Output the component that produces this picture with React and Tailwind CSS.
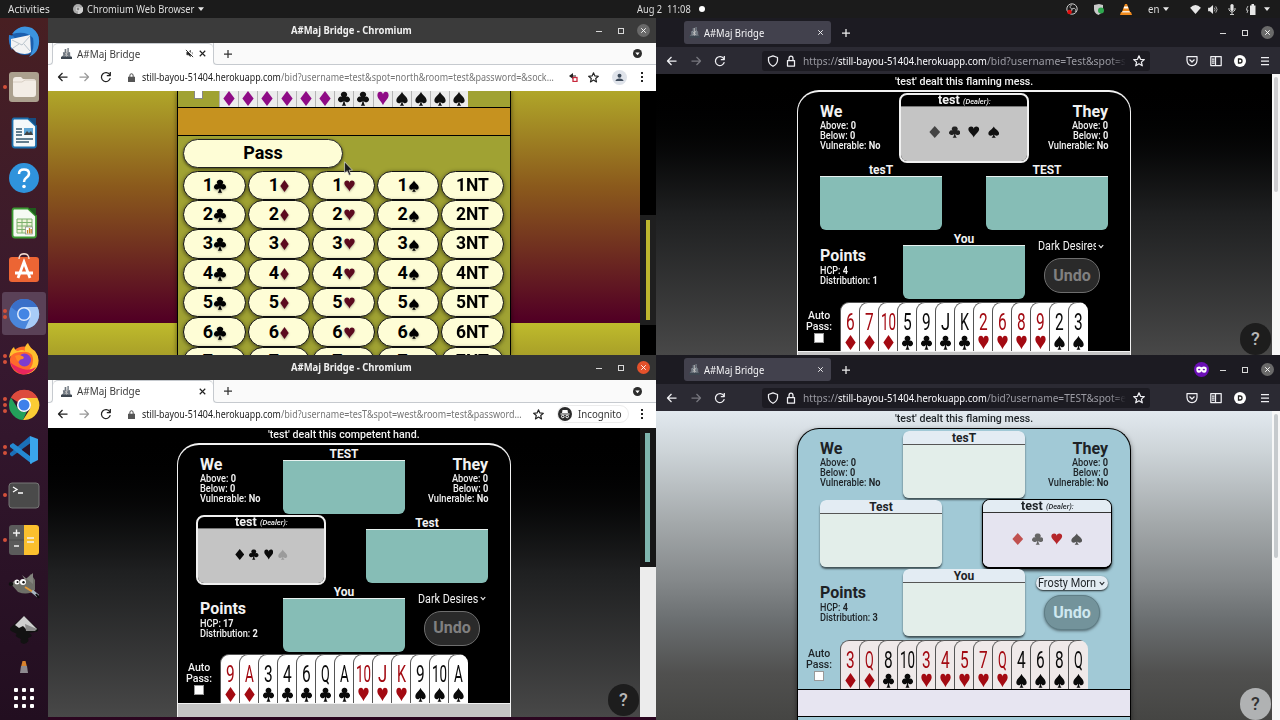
import React, { useLayoutEffect, useRef } from "react";

/* Text stretched horizontally to the width of its box. */
function Fit({ className = "", children }) {
  const outer = useRef(null);
  const inner = useRef(null);
  useLayoutEffect(() => {
    const target = outer.current.clientWidth;
    const natural = inner.current.offsetWidth;
    if (natural > 0) inner.current.style.transform = `scaleX(${target / natural})`;
  }, []);
  return (
    <span ref={outer} className={`block shrink-0 whitespace-nowrap text-left ${className}`}>
      <span ref={inner} className="inline-block origin-left whitespace-pre">
        {children}
      </span>
    </span>
  );
}

const SUITS = {
  d: "M8 0 L15.500 10 L8 20 L0.500 10 Z",
  h: "M8 19 C6.5 14 0.5 10.5 0.5 5.5 C0.5 2.5 2.3 1 4.4 1 C6.3 1 7.6 2.5 8 4.5 C8.4 2.5 9.7 1 11.6 1 C13.7 1 15.5 2.5 15.5 5.5 C15.5 10.5 9.5 14 8 19 Z",
  s: "M8 1 C9.5 5.5 15.5 8 15.5 12.5 C15.5 15 13.8 16.2 12 16.2 C10.5 16.2 9.3 15.4 8.7 14.2 C8.8 16.5 9.6 18.2 11 19.5 L5 19.5 C6.4 18.2 7.2 16.5 7.3 14.2 C6.7 15.4 5.5 16.2 4 16.2 C2.2 16.2 0.5 15 0.5 12.5 C0.5 8 6.5 5.5 8 1 Z",
  c: "M8 1 A3.7 3.7 0 0 1 10.7 7.6 A3.8 3.8 0 1 1 8.8 13 C8.9 15.8 9.5 18 11 19.5 L5 19.5 C6.5 18 7.1 15.8 7.2 13 A3.8 3.8 0 1 1 5.3 7.6 A3.7 3.7 0 0 1 8 1 Z",
};

function Suit({ s, className = "" }) {
  return (
    <svg viewBox="0 0 16 20" preserveAspectRatio="none" className={`shrink-0 ${className}`} fill="currentColor">
      <path d={SUITS[s]} />
    </svg>
  );
}

function Caret({ className = "" }) {
  return (
    <svg viewBox="0 0 8 5" className={`h-[4px] w-[6px] ${className}`} fill="#e6e6e6">
      <path d="M0 0H8L4 5Z" />
    </svg>
  );
}

/* ---------- desktop top bar ---------- */
function TopBar() {
  return (
    <header className="flex h-[18px] shrink-0 items-center bg-[#1b1b1b] font-['Noto_Sans',sans-serif] text-[10.5px] leading-[18px] text-[#dedede]">
      <Fit className="ml-2 w-[42px]">Activities</Fit>
      <svg viewBox="0 0 10 10" className="ml-[23px] h-[10px] w-[10px]">
        <circle cx="5" cy="5" r="5" fill="#aaa" />
        <path d="M5 5 L10 3 A5 5 0 0 1 5 10Z" fill="#d0d0d0" />
        <circle cx="5" cy="5" r="2.2" fill="#ddd" />
        <circle cx="5" cy="5" r="1.4" fill="#888" />
      </svg>
      <Fit className="ml-1 w-[107px]">Chromium Web Browser</Fit>
      <Caret className="ml-[4px]" />
      <Fit className="ml-[433px] w-[54px]">Aug 2  11:08</Fit>
      <span className="ml-2 h-[6px] w-[6px] rounded-full bg-white" />
      <div className="ml-auto flex items-center">
        <svg viewBox="0 0 12 12" className="h-[12px] w-[12px]">
          <circle cx="6" cy="6" r="5.2" fill="#1c1c1c" stroke="#ccc" strokeWidth="1" />
          <path d="M6 6 C3 5 4 2 6 2 M6 6 C9 4 11 7 9 9 M6 6 C6 9 3 10 2 8" stroke="#bbb" fill="none" />
          <circle cx="3.5" cy="9" r="2.3" fill="#e01010" />
        </svg>
        <svg viewBox="0 0 10 11" className="ml-[16px] h-[11px] w-[10px]">
          <path d="M0 1 L5 0 L9 1 V6 Q8 9 4.500 11 Q0 9 0 5Z" fill="#c9c9c9" />
          <circle cx="7" cy="6.500" r="3" fill="#2fa84f" />
        </svg>
        <svg viewBox="0 0 12 12" className="ml-[16px] h-[12px] w-[12px]">
          <path d="M5 1H7L10 9H2Z" fill="#f08a1d" />
          <path d="M4.200 3.500H7.800L8.500 5.500H3.500Z" fill="#fff" />
          <path d="M1 9H11L12 12H0Z" fill="#f08a1d" />
          <path d="M2.500 8H9.500L10 9.500H2Z" fill="#f4e6d4" />
        </svg>
        <Fit className="ml-[16px] w-[11px]">en</Fit>
        <Caret className="ml-[4px]" />
        <svg viewBox="0 0 12 10" className="ml-[21px] h-[9px] w-[11px]" fill="#e6e6e6">
          <path d="M0 3 Q6 -3 12 3 L6 10Z" />
        </svg>
        <svg viewBox="0 0 12 10" className="ml-[7px] h-[9px] w-[11px]" fill="#e6e6e6">
          <path d="M0 3H2L5.500 0V10L2 7H0Z" />
          <path d="M7 3Q8.500 5 7 7M8.500 1.500Q11.500 5 8.500 8.500" fill="none" stroke="#bbb" />
        </svg>
        <svg viewBox="0 0 8 11" className="ml-[9px] h-[11px] w-[8px]">
          <rect x="2.400" y="0" width="3.200" height="7" rx="1.600" fill="#e6e6e6" />
          <path d="M1 4V6Q4 10 7 6V4M4 8V11M2 10.500H6" stroke="#ccc" fill="none" />
        </svg>
        <svg viewBox="0 0 10 11" className="ml-[10px] h-[11px] w-[10px]">
          <path d="M2 2L0 6H2L1 9" stroke="#bbb" fill="none" />
          <path d="M4 1.500H5.500V0H8V1.500H9.500V11H4Z" fill="#e6e6e6" />
        </svg>
        <Caret className="ml-[8px] mr-[10px]" />
      </div>
    </header>
  );
}

/* ---------- dock ---------- */
function DockItem({ dots = 0, active = false, children }) {
  return (
    <div className="flex h-[45.3px] w-12 shrink-0 items-center">
      <div className={`ml-[2px] flex h-[43px] w-[44px] items-center rounded-[3px] ${active ? "bg-[#5a4157]" : ""}`}>
        <div className="flex w-[6px] flex-col items-center gap-[2px]">
          {Array.from({ length: dots }, (_, i) => (
            <span key={i} className="h-[4px] w-[4px] rounded-full bg-[#d2503a]" />
          ))}
        </div>
        <svg viewBox="0 0 32 32" className="h-[32px] w-[32px]">
          {children}
        </svg>
      </div>
    </div>
  );
}

function Dock() {
  return (
    <nav className="flex w-12 shrink-0 flex-col bg-gradient-to-b from-[#481f22] via-[#36182f] to-[#220e20] pt-[1.500px]">
      <DockItem>
        <circle cx="17" cy="15" r="14" fill="#1c5fae" />
        <path d="M4 8Q12 -3 24 2Q34 9 30 22Q28 28 21 31Q27 24 25 12Q18 4 4 8Z" fill="#3c94e0" />
        <path d="M1 9Q6 9 7 13L4 24Q0 18 1 9Z" fill="#2d7ccc" />
        <path d="M3 13L22 9L23 26Q18 30 8 26L3 21Z" fill="#f3f3f3" />
        <path d="M4 14L14 19L22 10M5 22L11 18M22 25L16 18" stroke="#b9c4cc" fill="none" />
      </DockItem>
      <DockItem dots={1}>
        <rect x="1" y="1" width="30" height="30" rx="3" fill="#aba08e" />
        <path d="M5 9Q5 6 8 6H13L15 8H25Q28 8 28 11V23Q28 26 25 26H8Q5 26 5 23Z" fill="#f3ede6" />
        <path d="M5 11L14 11L17 9H27" stroke="#d8cfc4" fill="none" />
      </DockItem>
      <DockItem>
        <path d="M6 1.500H20L28 9V28Q28 30.500 26 30.500H7Q4.500 30.500 4.500 28V4Q4.500 1.500 6 1.500Z" fill="#f5f8fa" stroke="#1b6fae" strokeWidth="1.800" />
        <path d="M20 1H28V9Z" fill="#174c80" />
        <path d="M8 12H14M8 15H14M8 18H14M8 22H25M8 25H21" stroke="#33566e" strokeWidth="1.300" />
        <rect x="16" y="11" width="9" height="7" fill="#5fa4d4" />
        <path d="M16 18L19 14L21 16L23 14L25 18Z" fill="#444" />
      </DockItem>
      <DockItem>
        <circle cx="16" cy="16" r="15" fill="#2f93dc" />
        <path d="M11 12Q11 7.500 16 7.500Q21 7.500 21 11.500Q21 14 18 16Q16 17.500 16 20" stroke="#fff" strokeWidth="2.500" fill="none" />
        <circle cx="16" cy="24.500" r="1.800" fill="#fff" />
      </DockItem>
      <DockItem>
        <path d="M6 1.500H20L28 9V28Q28 30.500 26 30.500H7Q4.500 30.500 4.500 28V4Q4.500 1.500 6 1.500Z" fill="#f6faf4" stroke="#3c9a33" strokeWidth="1.800" />
        <path d="M20 1H28V9Z" fill="#1f5a1c" />
        <path d="M9 12H24V26H9ZM9 15.500H24M9 19H24M9 22.500H24M14 12V26M19 12V26" stroke="#7cb06c" fill="#eef3d8" />
        <rect x="17.500" y="20" width="7" height="7" fill="#fff" stroke="#777" strokeWidth=".6" />
        <path d="M19.500 26.500V23M21.500 26.500V21M23.200 26.500V22" stroke="#c58426" strokeWidth="1.300" />
      </DockItem>
      <DockItem>
        <rect x="1" y="4" width="30" height="25" rx="3" fill="#ec6534" />
        <path d="M11 6Q11 1 16 .8Q21 1 21 6" stroke="#f4dccf" strokeWidth="1.400" fill="none" />
        <path d="M10 25L16 9L22 25M7 20H25" stroke="#fff" strokeWidth="2.800" fill="none" />
      </DockItem>
      <DockItem dots={2} active>
        <circle cx="16" cy="16" r="15" fill="#4a86dc" />
        <path d="M16 9H29.500A15 15 0 0 1 17 31L22 20Z" fill="#a8cbf7" />
        <path d="M3 9A15 15 0 0 1 29.500 9H16A7 7 0 0 0 9.500 14Z" fill="#3a6fc9" />
        <circle cx="16" cy="16" r="7" fill="#dfeafc" />
        <circle cx="16" cy="16" r="5.500" fill="#4385e4" />
      </DockItem>
      <DockItem dots={2}>
        <circle cx="16" cy="17.500" r="14" fill="#ff6a2b" />
        <path d="M1 15Q2 7 6 4Q7 8 10 8Q14 6 17 8Q16 3 20 0Q22 5 27 8Q33 16 29 24Q25 31 17 31Q28 22 24 12Q20 8 14 9Q6 8 1 15Z" fill="#ffbf2e" />
        <path d="M2 19Q5 29 15 31.500Q24 31 28 24Q22 28 15 26Q6 23 2 19Z" fill="#e8265e" />
        <circle cx="16.500" cy="17" r="6.500" fill="#7d3ccf" />
        <path d="M7 13Q11 11 14 13Q17 14 15 16Q11 16 11 19Q8 17 7 13Z" fill="#ff8b25" />
      </DockItem>
      <DockItem dots={3}>
        <path d="M16 16L3 8.500A15 15 0 0 1 29.500 9Z" fill="#dd4b3d" />
        <path d="M16 1A15 15 0 0 1 29.500 9H16A7 7 0 0 0 9.500 13L3 8.500A15 15 0 0 1 16 1Z" fill="#dd4b3d" />
        <path d="M3 8.500L10 20Q13 24 19 22L15 31A15 15 0 0 1 3 8.500Z" fill="#23a05a" />
        <path d="M16 9H29.500A15 15 0 0 1 15 31L22 20Q24 13 16 9Z" fill="#fbcc34" />
        <circle cx="16" cy="16" r="7" fill="#fff" />
        <circle cx="16" cy="16" r="5.500" fill="#3f80ea" />
      </DockItem>
      <DockItem dots={2}>
        <path d="M22 2L2 19V21L4 22.500L24 8Z" fill="#1b6fb8" />
        <path d="M2 11L5 9L24 23V30L2 13Z" fill="#2489d2" />
        <path d="M22 2L30 5V26L22 30Z" fill="#3aa5ec" />
        <path d="M22 10V22L14 16Z" fill="#2c1429" />
      </DockItem>
      <DockItem dots={1}>
        <rect x="1" y="4" width="30" height="25" rx="3" fill="#4a4a4a" stroke="#777" />
        <path d="M5 8L9 10.500L5 13M10 14H15" stroke="#fff" strokeWidth="1.300" fill="none" />
      </DockItem>
      <DockItem dots={1}>
        <path d="M4 1H16V31H4Q1 31 1 28V4Q1 1 4 1Z" fill="#5b5b5b" />
        <path d="M16 1H28Q31 1 31 4V28Q31 31 28 31H16Z" fill="#fbc02e" />
        <path d="M5 9H12M8.500 5.500V12.500M6 22H11M19 14H26M19 18H26" stroke="#f2f2f2" strokeWidth="1.400" />
        <path d="M1 16H16" stroke="#4a4a4a" />
      </DockItem>
      <DockItem>
        <path d="M3 14L7 10Q16 13 23 4L27 10V20Q20 26 10 22Z" fill="#6e6f68" />
        <path d="M14 5L17 10L25 3V14Z" fill="#83847e" />
        <circle cx="9" cy="12" r="2.500" fill="#fff" />
        <circle cx="15" cy="12" r="3" fill="#fff" />
        <circle cx="9.500" cy="12" r="1" fill="#111" />
        <circle cx="15.500" cy="12.300" r="1.200" fill="#111" />
        <ellipse cx="3" cy="14" rx="2.300" ry="2" fill="#111" />
        <path d="M17 17L25 22" stroke="#e49a35" strokeWidth="2" />
        <path d="M24 21L30 26" stroke="#a9b7c2" strokeWidth="3" />
        <path d="M28 24L31 28" stroke="#111" strokeWidth="2" />
      </DockItem>
      <DockItem>
        <path d="M16 1L30 14Q31 17 27 17L21 18Q27 21 20 23Q22 27 16 29Q11 28 13 24Q5 21 9 19L3 16Q1 14 3 12Z" fill="#121212" />
        <path d="M16 1L29 14L26 15L22 12L19 15L15 11L11 13L7 10Z" fill="#cfcfcf" />
        <path d="M17 9L29 14L27 16L18 16Z" fill="#8c8c8c" />
      </DockItem>
      <div className="flex h-[27px] items-center justify-center">
        <svg viewBox="0 0 8 12" className="h-[12px] w-[8px]">
          <path d="M2.500 0H5.500L7 6H1Z" fill="#d9812c" />
          <path d="M1 5H7L8 12H0Z" fill="#8e8a90" />
        </svg>
      </div>
      <div className="flex h-[34px] items-center justify-center">
        <div className="grid grid-cols-3 gap-[4px]">
          {Array.from({ length: 9 }, (_, i) => (
            <span key={i} className="h-[4px] w-[4px] rounded-[1px] bg-white" />
          ))}
        </div>
      </div>
    </nav>
  );
}

/* ---------- small icons ---------- */
const ICONS = {
  back: "M10.500 6H1.500M5.500 2L1.500 6L5.500 10",
  fwd: "M1.500 6H10.500M6.500 2L10.500 6L6.500 10",
  reload: "M9.800 3.800A4.500 4.500 0 1 0 10.300 7.200M10.300 1V4.500H6.800",
  plus: "M6 2V10M2 6H10",
  close: "M3 3L9 9M9 3L3 9",
  star: "M6 .8L7.500 4.300L11.300 4.600L8.400 7.100L9.300 10.800L6 8.800L2.700 10.800L3.600 7.100L.7 4.600L4.500 4.300Z",
  shield: "M6 .8L10.500 2.500V5.500Q10.200 9 6 11.300Q1.800 9 1.500 5.500V2.500Z",
  lock: "M2.500 5.500H9.500V11H2.500ZM4 5.500V3.500Q4 1 6 1Q8 1 8 3.500V5.500",
  pocket: "M1 1.500H11V5.500Q10.500 10.500 6 10.500Q1.500 10.500 1 5.500ZM3.500 4.500L6 7L8.500 4.500",
  sidebar: "M.8 1.500H11.200V10.500H.8ZM5.500 1.500V10.500M2 4H4.500M2 6H4.500M2 8H4.500",
  menu: "M2 2.500H10M2 6H10M2 9.500H10",
};
function Ico({ n, className = "h-3 w-3" }) {
  return (
    <svg viewBox="0 0 12 12" className={`shrink-0 ${className}`} fill="none" stroke="currentColor" strokeWidth="1.250" strokeLinejoin="round">
      <path d={ICONS[n]} />
    </svg>
  );
}

function WinButtons({ closeClass }) {
  return (
    <div className="mr-[6px] flex items-center text-[#d8d8d8]">
      <span className="mt-[2px] h-px w-[6px] bg-current" />
      <span className="ml-[16px] h-[6px] w-[6px] border border-current" />
      <span className={`ml-[13px] flex h-[13px] w-[13px] items-center justify-center rounded-full text-white ${closeClass}`}>
        <Ico n="close" className="h-[9px] w-[9px]" />
      </span>
    </div>
  );
}

function Favicon({ className = "" }) {
  return (
    <svg viewBox="0 0 12 12" className={`h-[11px] w-[11px] shrink-0 ${className}`}>
      <path d="M4 1H5.500V4H7V0H8.500V4L10 5V8L11 10V11H1V9L2.500 8L2 5L4 4Z" fill="#6f7780" />
      <path d="M4 5L8 9M8 4L4 9M6 1V11" stroke="#c5c5c5" strokeWidth=".8" />
      <path d="M0 9.500H12V12H0Z" fill="#3d4650" />
    </svg>
  );
}

/* ---------- Chromium frame ---------- */
function Chromium({ titleClass, closeClass, tabsClass, navClass, bodyClass, muted, incognito, urlRest, restClass, children }) {
  return (
    <section className="flex w-[608px] shrink-0 flex-col font-['Noto_Sans',sans-serif]">
      <div className={`flex shrink-0 items-center justify-between ${titleClass}`}>
        <Fit className="ml-[243px] w-[121px] pb-px text-[11px] leading-[16px] font-bold text-[#f0f0f0]">A#Maj Bridge - Chromium</Fit>
        <WinButtons closeClass={closeClass} />
      </div>
      <div className={`flex shrink-0 items-stretch bg-[#fafafa] ${tabsClass}`}>
        <div className="w-[5px] rounded-br-[4px] border-r border-b border-[#c6cacf]" />
        <div className="flex w-[160px] items-center rounded-t-[5px] border-t border-[#c6cacf] bg-white pb-[2px] text-[#3c3c3c]">
          <Favicon className="ml-2" />
          <Fit className="ml-[5px] w-[63px] text-[11px] leading-4">A#Maj Bridge</Fit>
          <span className="ml-auto flex items-center gap-[3px] text-[#222]">
            {muted && (
              <svg viewBox="0 0 10 10" className="h-[9px] w-[9px]">
                <path d="M2 3.500H4L6 1.500V8.500L4 6.500H2ZM8 3.500V6.500" fill="#222" stroke="#222" strokeWidth=".6" />
                <path d="M1 0L10 9" stroke="#fff" strokeWidth="1.600" />
                <path d="M1 1L9 9" stroke="#222" />
              </svg>
            )}
            <Ico n="close" className="mr-[5px] h-[11px] w-[11px]" />
          </span>
        </div>
        <div className="flex flex-1 items-center rounded-bl-[4px] border-b border-l border-[#c6cacf] text-[#333]">
          <Ico n="plus" className="ml-[8px] h-[12px] w-[12px]" />
          <svg viewBox="0 0 10 10" className="ml-auto mr-[14px] h-[9px] w-[9px]">
            <circle cx="5" cy="5" r="5" fill="#2c2c2c" />
            <path d="M2.600 3.800H7.400L5 7Z" fill="#fff" />
          </svg>
        </div>
      </div>
      <div className={`flex shrink-0 items-center bg-white text-[#222] ${navClass}`}>
        <Ico n="back" className="ml-[9px] h-3 w-3" />
        <Ico n="fwd" className="ml-[9px] h-3 w-3 text-[#9a9a9a]" />
        <Ico n="reload" className="ml-[10px] h-3 w-3" />
        <svg viewBox="0 0 8 10" className="ml-[16px] h-[9px] w-[7px]" fill="#555">
          <path d="M0 4H1.500V3Q1.500 0 4 0Q6.500 0 6.500 3V4H8V10H0ZM2.700 4H5.300V3Q5.300 1.300 4 1.300Q2.700 1.300 2.700 3Z" />
        </svg>
        <Fit className="ml-[7px] w-[139px] text-[11px] leading-4 text-[#1b1b1b]">still-bayou-51404.herokuapp.com</Fit>
        <Fit className={`text-[11px] leading-4 text-[#777] ${restClass}`}>{urlRest}</Fit>
        {incognito ? (
          <div className="ml-auto flex items-center">
            <Ico n="star" className="h-[11px] w-[11px]" />
            <div className="ml-[13px] flex h-[18px] w-[72px] items-center rounded-full border border-[#ececec] bg-white">
              <svg viewBox="0 0 14 14" className="h-[14px] w-[14px]">
                <circle cx="7" cy="7" r="7" fill="#2b2b2b" />
                <path d="M4.500 3H9.500L10 6H4Z" fill="#fff" />
                <path d="M2.500 7H11.500" stroke="#fff" />
                <circle cx="4.800" cy="9.500" r="1.300" fill="none" stroke="#fff" />
                <circle cx="9.200" cy="9.500" r="1.300" fill="none" stroke="#fff" />
              </svg>
              <Fit className="ml-[6px] w-[44px] text-[11px] leading-4 text-[#333]">Incognito</Fit>
            </div>
          </div>
        ) : (
          <div className="ml-auto flex items-center">
            <svg viewBox="0 0 10 10" className="h-[10px] w-[10px]">
              <path d="M1 4L5 1V7Z" fill="#222" />
              <path d="M5 4H8" stroke="#222" />
              <rect x="5" y="5.500" width="4" height="4" fill="#fff" stroke="#c8283c" strokeWidth="1.300" />
            </svg>
            <Ico n="star" className="ml-[10px] h-[11px] w-[11px]" />
            <span className="ml-[13px] mr-[2px] flex h-[15px] w-[15px] items-center justify-center rounded-full bg-[#dfe3ea]">
              <svg viewBox="0 0 10 10" className="h-[9px] w-[9px]" fill="#3d4a5a">
                <circle cx="5" cy="3" r="2.200" />
                <path d="M0.500 9Q1 6 5 6Q9 6 9.500 9Z" />
              </svg>
            </span>
          </div>
        )}
        <span className="ml-[12px] mr-[13px] flex flex-col gap-[2px]">
          <i className="h-[2px] w-[2px] bg-[#222]" />
          <i className="h-[2px] w-[2px] bg-[#222]" />
          <i className="h-[2px] w-[2px] bg-[#222]" />
        </span>
      </div>
      <div className={`relative flex shrink-0 overflow-hidden font-[Roboto,sans-serif] ${bodyClass}`}>{children}</div>
    </section>
  );
}

/* ---------- Firefox frame ---------- */
function Firefox({ mask, urlRest, bodyClass, children }) {
  return (
    <section className="flex w-[624px] shrink-0 flex-col font-['Noto_Sans',sans-serif]">
      <div className="flex h-[29px] shrink-0 items-center bg-[#1c1b22]">
        <div className="ml-[28px] flex h-[23px] w-[147px] items-center rounded-[3px] bg-[#42414d] text-[#f4f4f6]">
          <Favicon className="ml-[5px]" />
          <Fit className="ml-[4px] w-[60px] text-[11px] leading-4">A#Maj Bridge</Fit>
          <Ico n="close" className="ml-auto mr-[6px] h-[9px] w-[9px]" />
        </div>
        <Ico n="plus" className="ml-[9px] h-3 w-3 text-[#eee]" />
        <div className="ml-auto flex items-center">
          {mask && (
            <svg viewBox="0 0 16 16" className="mr-[11px] h-[15px] w-[15px]">
              <circle cx="8" cy="8" r="8" fill="#6b0fb5" />
              <path d="M2.500 6Q5 4 8 5.500Q11 4 13.500 6Q14 11.500 11 11.500Q9 11.500 8 9.800Q7 11.500 5 11.500Q2 11.500 2.500 6Z" fill="#fff" />
              <ellipse cx="5.500" cy="8" rx="1.200" ry=".9" fill="#6b0fb5" />
              <ellipse cx="10.500" cy="8" rx="1.200" ry=".9" fill="#6b0fb5" />
            </svg>
          )}
          <WinButtons closeClass="bg-[#6a6a6a]" />
        </div>
      </div>
      <div className="flex h-[27px] shrink-0 items-center bg-[#2b2a33] text-[#f0f0f4]">
        <Ico n="back" className="ml-[10px] h-3 w-3" />
        <Ico n="fwd" className="ml-[12px] h-3 w-3 text-[#77767e]" />
        <Ico n="reload" className="ml-[12px] h-3 w-3" />
        <div className="ml-[36px] flex h-[20px] w-[388px] items-center rounded-[3px] bg-[#1c1b22]">
          <Ico n="shield" className="ml-[5px] h-3 w-3" />
          <Ico n="lock" className="ml-[6px] h-3 w-3" />
          <Fit className="ml-[6px] w-[35px] text-[11px] leading-4 text-[#9b9ba3]">https://</Fit>
          <Fit className="w-[149px] text-[11px] leading-4 text-[#fbfbfe]">still-bayou-51404.herokuapp.com</Fit>
          <div className="w-[139px] overflow-hidden [mask-image:linear-gradient(to_right,black_88%,transparent)]">
            <Fit className="w-[139px] text-[11px] leading-4 text-[#9b9ba3]">{urlRest}</Fit>
          </div>
          <Ico n="star" className="ml-[7px] h-3 w-3" />
        </div>
        <div className="ml-auto mr-[9px] flex items-center">
          <Ico n="pocket" />
          <Ico n="sidebar" className="ml-[12px] h-3 w-3" />
          <svg viewBox="0 0 12 12" className="ml-[12px] h-[12px] w-[12px]">
            <circle cx="6" cy="6" r="6" fill="#fff" />
            <path d="M4.500 4H6Q8 4 8 6Q8 8 6 8H4.500Z" fill="none" stroke="#222" strokeWidth="1.300" />
          </svg>
          <Ico n="menu" className="ml-[13px] h-3 w-3" />
        </div>
      </div>
      <div className={`relative flex shrink-0 overflow-hidden font-[Roboto,sans-serif] ${bodyClass}`}>{children}</div>
    </section>
  );
}

/* ---------- bridge table ---------- */
const DARK = {
  page: "bg-gradient-to-b from-black via-[#1f2021] to-[#484848] text-[#f2f2f2]",
  board: "border-x border-t-2 pt-[2px] border-[#f2f2f2] bg-black",
  seat: "rounded-b-[6px]",
  seatHead: "border-[#e8f2f0]",
  seatBody: "bg-[#86bdb6]",
  activeBorder: "border-2 border-[#f0f0f0] bg-black",
  activeHead: "h-[12px] border-[#777]",
  activeBody: "bg-[#c4c4c4]",
  undo: "border-[#6e6e6e] bg-[#2a2a2a] text-[#808080]",
  select: "",
  card: "bg-white border-[#555]",
  strip: "border-[#f2f2f2] bg-[#c4c4c4]",
  help: "bg-[#1d1d1d] text-[#b8b8b8]",
};
const FROST = {
  page: "bg-[linear-gradient(to_bottom,#e2e9ef_0%,#cdd4d8_13%,#a4a9ab_36%,#84888a_55%,#6a6e70_68%,#50504f_85%,#454543_100%)] text-[#1d2226]",
  board: "border-x border-t pt-[2px] border-black bg-[#a1c9d6] shadow-[0_2px_5px_rgba(0,0,0,0.5)]",
  seat: "rounded-[6px] shadow-[0_2px_2px_rgba(0,0,0,0.6)]",
  seatHead: "border-[#555] bg-[#e3ecf3] rounded-t-[6px]",
  seatBody: "bg-[#e3eeea]",
  activeBorder: "border border-b-2 border-black bg-[#e3ecf3] shadow-[0_2px_3px_rgba(0,0,0,0.7)]",
  activeHead: "h-[13px] border-[#333] bg-[#e3ecf3]",
  activeBody: "bg-[#e5e4f0]",
  undo: "border-[#5f7e86] bg-[#73939b] text-[#cfe8f0] shadow-[0_1px_3px_rgba(0,0,0,0.5)]",
  select: "rounded-full bg-[#e3ecf3] shadow-[0_1px_2px_rgba(0,0,0,0.8)]",
  card: "bg-[#efe9e9] border-[#555]",
  strip: "border-black bg-[#e7e5f1]",
  help: "bg-[#b0b2b3] text-[#333]",
};

function Seat({ t, name, dealer, children }) {
  if (dealer) {
    return (
      <div className={`-mx-1 -mt-px flex h-[70px] w-[130px] shrink-0 flex-col overflow-hidden rounded-[8px] ${t.activeBorder}`}>
        <div className={`flex shrink-0 items-center justify-center gap-[3px] border-b ${t.activeHead}`}>
          <Fit className="w-[22px] text-[12px] leading-[11px] font-bold">{name}</Fit>
          <Fit className="w-[28px] pt-px text-[8px] leading-[11px] font-medium italic">(Dealer):</Fit>
        </div>
        <div className={`flex flex-1 items-center justify-center ${t.activeBody}`}>{children}</div>
      </div>
    );
  }
  return (
    <div className={`flex h-[67px] w-[122px] shrink-0 flex-col overflow-hidden ${t.seat}`}>
      <div className={`h-[14px] shrink-0 border-b text-center text-[12px] leading-[14px] font-bold ${t.seatHead}`}>{name}</div>
      <div className={`flex-1 ${t.seatBody}`} />
    </div>
  );
}

function Score({ title, right }) {
  return (
    <div className={`flex w-[105px] shrink-0 flex-col pt-[9px] text-[10px] leading-[10px] font-medium ${right ? "items-end pr-[22px]" : "pl-[22px]"}`}>
      <h2 className="mb-px text-[16px] leading-[17px] font-bold">{title}</h2>
      <Fit className="w-[36px]">Above: <b>0</b></Fit>
      <Fit className="w-[35px]">Below: <b>0</b></Fit>
      <Fit className="w-[60px]">Vulnerable: <b>No</b></Fit>
    </div>
  );
}

function Hand({ t, cards }) {
  return (
    <div className="flex h-[49px] w-[248px] overflow-hidden rounded-tr-[9px]">
      {cards.map(([rank, suit], i) => (
        <div
          key={i}
          className={`-mr-[13px] flex w-[32px] shrink-0 flex-col items-start rounded-tl-[9px] border-t border-l ${t.card} ${suit === "d" || suit === "h" ? "text-[#a30a12]" : "text-[#0a0a0a]"}`}
        >
          <Fit className={`mt-[7px] text-[24px] leading-[24px] ${rank === "10" ? "ml-[2px] w-[15px]" : "ml-[5px] w-[9px]"}`}>{rank}</Fit>
          <Suit s={suit} className="mt-px ml-[4px] h-[15px] w-[11px]" />
        </div>
      ))}
    </div>
  );
}

function Table({ t, message, messageClass, boardClass, seats, points, pointsClass, select, selectBox, selectClass, northClass, southClass, cards, stripClass }) {
  return (
    <div className={`flex flex-1 flex-col items-center ${t.page}`}>
      <Fit className={`text-[11px] font-medium ${messageClass}`}>{message}</Fit>
      <div className={`flex w-[334px] shrink-0 flex-col rounded-t-[22px] ${t.board} ${boardClass}`}>
        <div className={`flex ${northClass}`}>
          <Score title="We" />
          {seats[0]}
          <Score title="They" right />
        </div>
        <div className="flex h-[69px] justify-between px-[22px]">
          {seats[1]}
          {seats[2]}
        </div>
        <div className={`flex ${southClass}`}>
          <div className="w-[105px] shrink-0 pt-[15px] pl-[22px] text-[10px] leading-[10px] font-medium">
            <h2 className="mb-px text-[16px] leading-[18px] font-bold">Points</h2>
            <Fit className={pointsClass}>HCP: <b>{points[0]}</b></Fit>
            <Fit className="w-[58px]">Distribution: <b>{points[1]}</b></Fit>
          </div>
          {seats[3]}
          <div className="flex w-[105px] flex-col pt-[7px]">
            <div className={`ml-[11px] flex h-[14px] w-[72px] shrink-0 items-center text-[12px] leading-[14px] ${t.select}`}>
              <div className={`ml-[2px] overflow-hidden ${selectBox}`}>
                <Fit className={selectClass}>{select}</Fit>
              </div>
              <svg viewBox="0 0 8 6" className="ml-[2px] h-[5px] w-[6px]" fill="none" stroke="currentColor" strokeWidth="1.500">
                <path d="M1 1L4 4.500L7 1" />
              </svg>
            </div>
            <div className={`mt-[5px] ml-[19px] flex h-[35px] w-[56px] shrink-0 items-center justify-center rounded-[17px] border text-[16px] font-bold ${t.undo}`}>Undo</div>
          </div>
        </div>
        <div className="flex h-[49px]">
          <div className="flex w-[42px] shrink-0 flex-col items-center pt-[8px] text-[11px] leading-[11px] font-medium">
            <Fit className="w-[22px]">Auto</Fit>
            <Fit className="w-[26px]">Pass:</Fit>
            <span className="mt-px h-[10px] w-[10px] border border-[#999] bg-white" />
          </div>
          <Hand t={t} cards={cards} />
        </div>
        <div className={`border-t ${t.strip} ${stripClass}`} />
        <div className="flex-1" />
      </div>
    </div>
  );
}

function Help({ t, className }) {
  return (
    <button aria-label="Help" className={`absolute flex h-[32px] w-[31px] items-center justify-center rounded-full text-[18px] leading-none font-medium ${t.help} ${className}`}>
      ?
    </button>
  );
}

function SuitRow({ suits, className, size }) {
  return (
    <div className={`flex items-center ${className}`}>
      {suits.map(([s, c]) => (
        <Suit key={s} s={s} className={`${size} ${c}`} />
      ))}
    </div>
  );
}

const hand = (str) => str.split(" ").map((c) => [c.slice(0, -1), c.slice(-1)]);

/* ---------- bidding page ---------- */
function Bidding() {
  const top = ["d", "d", "d", "d", "d", "d", "c", "c", "h", "s", "s", "s", "s"];
  const cols = [
    ["c", "text-black w-[12px] h-[14px] mt-[2px]"],
    ["d", "text-[#5b0a1f] w-[9px] h-[12px] mt-[2px]"],
    ["h", "text-[#5b0a1f] w-[11px] h-[12px] mt-[2px]"],
    ["s", "text-black w-[10px] h-[12px] mt-[3px]"],
  ];
  return (
    <>
      <div className="flex w-[592px] shrink-0 justify-center bg-[linear-gradient(to_bottom,#b0a629_0px,#8b5a1c_95px,#520024_228px,#4f0022_232px,#bfbb2c_232px,#a9a028_264px)]">
        <div className="flex w-[334px] flex-col border-x border-black bg-[#a0a233] shadow-[0_0_5px_rgba(0,0,0,0.5)]">
          <div className="flex h-[16px] shrink-0">
            <div className="flex w-[41px] justify-center">
              <span className="h-[8px] w-[9px] border border-[#888] border-t-0 bg-white" />
            </div>
            <div className="flex bg-[#ececec]">
              {top.map((s, i) => (
                <div
                  key={i}
                  className={`flex w-[19.200px] justify-center border-l border-[#b5b5b5] ${s === "d" || s === "h" ? "text-[#8f0b86]" : "text-[#111]"}`}
                >
                  <Suit s={s} className="h-[15px] w-[12px]" />
                </div>
              ))}
            </div>
          </div>
          <div className="h-[29px] shrink-0 border-y border-black bg-[#c6921f]" />
          <div className="flex flex-col pt-[3px] pl-[5px]">
            <div className="flex h-[29px] w-[160px] items-center justify-center rounded-full border border-[#222] bg-[#fefdd6] pb-[2px] text-[18px] leading-none font-bold text-black shadow-[0_1px_3px_rgba(0,0,0,0.6)]">
              Pass
            </div>
            <div className="mt-[2.500px] grid w-[321px] grid-cols-5 gap-x-[2px]">
              {[1, 2, 3, 4, 5, 6, 7].map((n) => (
                <React.Fragment key={n}>
                  {cols.map(([s, c]) => (
                    <div key={s} className="flex h-[29.400px] items-center justify-center rounded-full border border-[#111] bg-[#fefdd6] pb-px text-[18px] leading-none font-bold text-black shadow-[0_1px_4px_rgba(0,0,0,0.55)]">
                      {n}
                      <Suit s={s} className={`ml-px drop-shadow-[0_1px_1px_rgba(0,0,0,0.35)] ${c}`} />
                    </div>
                  ))}
                  <div className="flex h-[29.400px] items-center justify-center rounded-full border border-[#111] bg-[#fefdd6] pb-px text-[18px] leading-none font-bold text-black shadow-[0_1px_4px_rgba(0,0,0,0.55)]">
                    <Fit className="w-[33px]">{n + "NT"}</Fit>
                  </div>
                </React.Fragment>
              ))}
            </div>
          </div>
        </div>
      </div>
      <div className="flex w-4 shrink-0 flex-col items-center bg-black pt-[124px]">
        <div className="flex h-[110px] w-4 justify-center bg-[#1f1f1f] py-[5px]">
          <div className="mr-px h-[100px] w-[4px] bg-[#bdb82f]" />
        </div>
      </div>
      <svg viewBox="0 0 8 13" className="absolute top-[70px] left-[296px] h-[15px] w-[9px]">
        <path d="M.5 .5V10.500L2.800 8.500L4.500 12.500L6 11.800L4.500 8H7.500Z" fill="#1a1a1a" stroke="#ddd" strokeWidth=".6" />
      </svg>
    </>
  );
}

export default function App() {
  return (
    <div className="flex h-[720px] w-[1280px] flex-col overflow-hidden bg-[#2a0a20]">
      <TopBar />
      <div className="flex min-h-0 flex-1">
        <Dock />
        <main className="flex w-[608px] shrink-0 flex-col">
          <Chromium
            titleClass="h-[25px] bg-[#3b3b3b]"
            closeClass="bg-[#696969]"
            tabsClass="h-[22px]"
            navClass="h-[26px] pb-[2px]"
            bodyClass="h-[264px]"
            muted
            urlRest="/bid?username=test&spot=north&room=test&password=&sock…"
            restClass="w-[273px]"
          >
            <Bidding />
          </Chromium>
          <Chromium
            titleClass="h-[25px] bg-[#333333]"
            closeClass="bg-[#e4512b]"
            tabsClass="h-[23px]"
            navClass="h-[25px] pb-[3px]"
            bodyClass="h-[289px]"
            incognito
            urlRest="/bid?username=tesT&spot=west&room=test&password…"
            restClass="w-[241px]"
          >
            <Table
              t={DARK}
              message="'test' dealt this competent hand."
              messageClass="w-[152px] h-[15px] leading-[14px]"
              boardClass="h-[274px]"
              seats={[
                <Seat key="n" t={DARK} name="TEST" />,
                <Seat key="w" t={DARK} name="test" dealer>
                  <SuitRow
                    className="gap-[5px] pb-[3px] text-[#0a0a0a]"
                    size="h-[11px] w-[9.500px]"
                    suits={[["d", ""], ["c", ""], ["h", ""], ["s", "text-[#9b9b9b]"]]}
                  />
                </Seat>,
                <Seat key="e" t={DARK} name="Test" />,
                <Seat key="s" t={DARK} name="You" />,
              ]}
              points={[17, 2]}
              pointsClass="w-[34px]"
              select="Dark Desires"
              selectBox="w-[60px]"
              selectClass="w-[60px]"
              northClass="h-[70px]"
              southClass="h-[71px]"
              cards={hand("9d Ad 3c 4c 6c Qc Ac 10h Jh Kh 9s 10s As")}
              stripClass="h-[14px]"
            />
            <div className="flex w-4 shrink-0 flex-col bg-[#ececec]">
              <div className="flex h-[139px] justify-center bg-[#161616] pt-[5px]">
                <div className="mr-px h-[129px] w-[5px] bg-[#7fb5ae]" />
              </div>
            </div>
            <Help t={DARK} className="top-[256px] left-[560px]" />
          </Chromium>
          <div className="h-[3px] bg-[#2b0620]" />
        </main>
        <div className="flex w-[624px] shrink-0 flex-col">
          <Firefox urlRest="/bid?username=Test&spot=s" bodyClass="h-[281px]">
            <Table
              t={DARK}
              message="'test' dealt this flaming mess."
              messageClass="w-[138px] h-[16px] leading-[16px]"
              boardClass="h-[265px]"
              seats={[
                <Seat key="n" t={DARK} name="test" dealer>
                  <SuitRow
                    className="gap-[8px] pb-[5px]"
                    size="h-[12px] w-[11.500px]"
                    suits={[["d", "text-[#444]"], ["c", "text-[#222]"], ["h", "text-[#111]"], ["s", "text-[#111]"]]}
                  />
                </Seat>,
                <Seat key="w" t={DARK} name="tesT" />,
                <Seat key="e" t={DARK} name="TEST" />,
                <Seat key="s" t={DARK} name="You" />,
              ]}
              points={[4, 1]}
              pointsClass="w-[28px]"
              select="Dark Desires"
              selectBox="w-[58px]"
              selectClass="w-[60px]"
              northClass="h-[69px]"
              southClass="h-[70px]"
              cards={hand("6d 7d 10d 5c 9c Jc Kc 2h 6h 8h 9h 2s 3s")}
              stripClass="h-[4px]"
            />
            <div className="flex w-2 shrink-0 justify-center bg-[#f7f7f7] pt-[3px]">
              <div className="h-[115px] w-[4px] rounded-full bg-[#cdcdd0]" />
            </div>
            <Help t={DARK} className="top-[249px] left-[584px]" />
          </Firefox>
          <Firefox mask urlRest="/bid?username=TEST&spot=e" bodyClass="h-[309px]">
            <Table
              t={FROST}
              message="'test' dealt this flaming mess."
              messageClass="w-[138px] h-[17px] leading-[15px]"
              boardClass="h-[292px]"
              seats={[
                <Seat key="n" t={FROST} name="tesT" />,
                <Seat key="w" t={FROST} name="Test" />,
                <Seat key="e" t={FROST} name="test" dealer>
                  <SuitRow
                    className="gap-[8px] pb-[3px]"
                    size="h-[12px] w-[11.500px]"
                    suits={[["d", "text-[#c0504f]"], ["c", "text-[#666]"], ["h", "text-[#b5262b]"], ["s", "text-[#555]"]]}
                  />
                </Seat>,
                <Seat key="s" t={FROST} name="You" />,
              ]}
              points={[4, 3]}
              pointsClass="w-[28px]"
              select="Frosty Morn"
              selectBox="w-[59px]"
              selectClass="w-[58px]"
              northClass="h-[69px]"
              southClass="h-[71px]"
              cards={hand("3d Qd 8c 10c 3h 4h 5h 7h Qh 4s 6s 8s Qs")}
              stripClass="h-[28px] border-b"
            />
            <div className="flex w-2 shrink-0 justify-center bg-[#f7f7f7] pt-[3px]">
              <div className="h-[144px] w-[4px] rounded-full bg-[#c6cacd]" />
            </div>
            <Help t={FROST} className="top-[277px] left-[584px]" />
          </Firefox>
        </div>
      </div>
    </div>
  );
}
